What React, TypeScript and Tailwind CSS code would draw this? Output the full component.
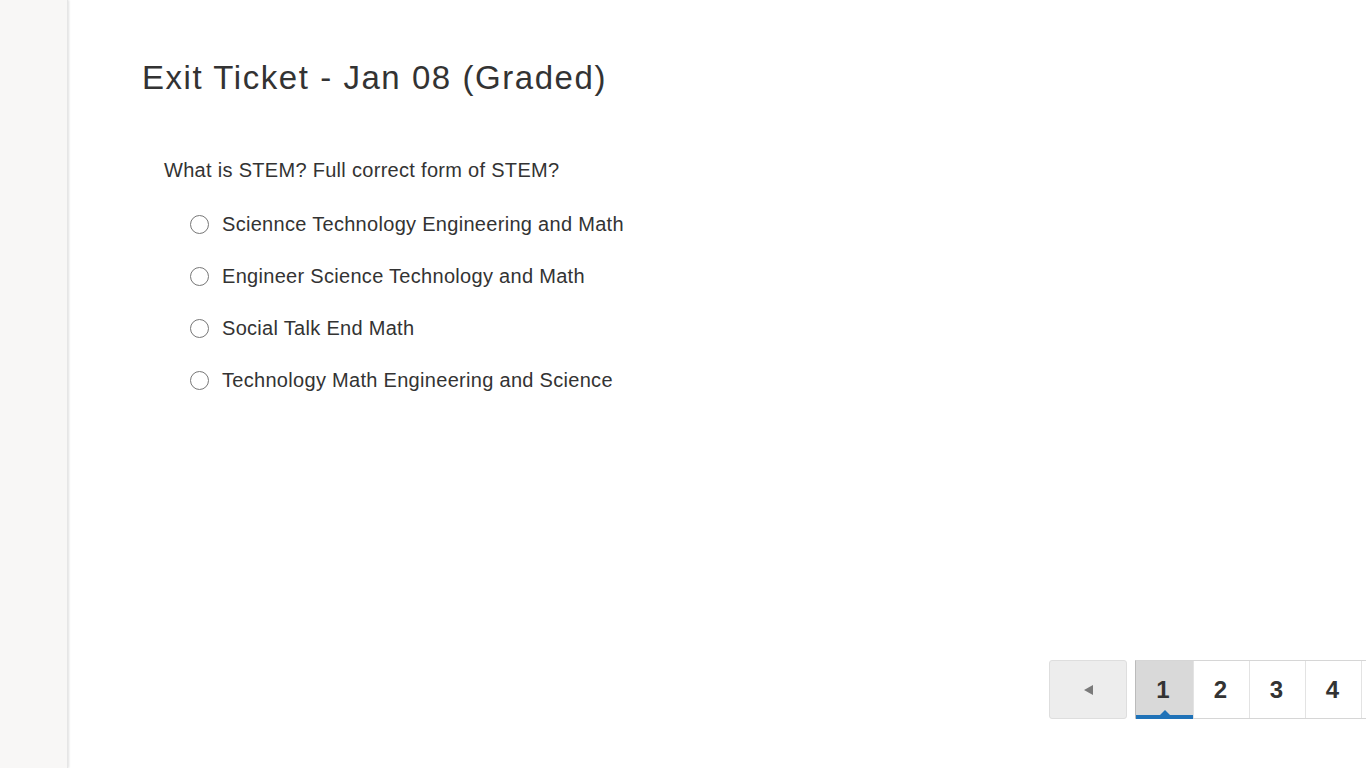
import React from 'react';

const options = [
  'Sciennce Technology Engineering and Math',
  'Engineer Science Technology and Math',
  'Social Talk End Math',
  'Technology Math Engineering and Science',
];

const pages = ['1', '2', '3', '4', '5'];

const App: React.FC = () => {
  return (
    <div className="flex h-screen w-full overflow-hidden bg-white text-[#333] font-['Liberation_Sans',Arial,sans-serif]">
      {/* Left rail */}
      <aside className="w-[68px] shrink-0 bg-[#f8f7f6] shadow-[1px_0_2px_rgba(0,0,0,0.12)] border-r border-[#e6e6e6]" />

      <main className="flex min-w-0 flex-1 flex-col">
        <h1 className="ml-[74px] mt-[58px] text-[33px] leading-[40px] tracking-[1.55px] text-[#333]">
          Exit Ticket - Jan 08 (Graded)
        </h1>

        <section className="ml-[96px] mt-[60px]">
          <p className="text-[20px] leading-[24px] tracking-[0.3px]">What is STEM? Full correct form of STEM?</p>

          <ul className="ml-[26px] mt-[30px] flex flex-col gap-[28px]">
            {options.map((opt) => (
              <li key={opt} className="flex items-center gap-[13px]">
                <span className="h-[19px] w-[19px] shrink-0 rounded-full border border-[#777] bg-white" />
                <span className="text-[20px] leading-[24px] tracking-[0.3px]">{opt}</span>
              </li>
            ))}
          </ul>
        </section>

        {/* Pagination */}
        <nav className="mt-auto mb-[49px] ml-[981px] flex items-stretch gap-[8px]">
          <button className="flex h-[59px] w-[78px] shrink-0 items-center justify-center rounded-[3px] border border-[#dedede] bg-[#ededed]">
            <svg width="11" height="12" viewBox="0 0 11 12">
              <path d="M10 1 L1 6 L10 11 Z" fill="#7a7a7a" />
            </svg>
          </button>
          <div className="flex h-[59px] shrink-0 border border-[#d6d6d6] border-l-[#bbb] bg-white">
            {pages.map((p, i) => (
              <div
                key={p}
                className={
                  i === 0
                    ? 'relative flex w-[57px] items-center justify-center bg-[#d9d9d9] pr-[3px] text-[24px] font-bold'
                    : 'flex w-[56px] items-center justify-center border-l border-[#e3e3e3] pr-[2px] text-[24px] font-bold'
                }
              >
                {p}
                {i === 0 && (
                  <>
                    <span className="absolute bottom-[-1px] left-0 right-0 h-[4px] bg-[#1f72b8]" />
                    <svg className="absolute bottom-[2px] left-1/2 -translate-x-1/2" width="12" height="6" viewBox="0 0 12 6">
                      <path d="M0 6 L6 0 L12 6 Z" fill="#1f72b8" />
                    </svg>
                  </>
                )}
              </div>
            ))}
          </div>
        </nav>
      </main>
    </div>
  );
};

export default App;
